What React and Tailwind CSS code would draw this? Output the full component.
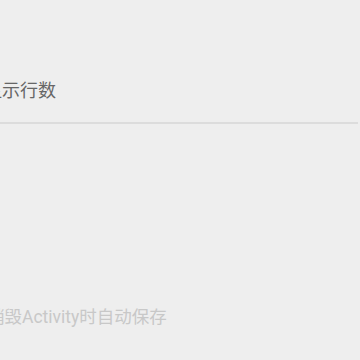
export default function App() {
  return (
    <div
      className="w-[360px] h-[360px] overflow-hidden bg-[#eeeeee] flex flex-col"
      style={{ fontFamily: 'Roboto, "Noto Sans CJK SC", sans-serif' }}
    >
      <div className="mt-[79px] -ml-[16px] text-[18px] leading-[24px] text-[#666666] whitespace-nowrap">
        显示行数
      </div>
      <div className="mt-[19px] h-[2px] w-[358px] bg-[#dcdcdc]" />
      <div className="mt-[181px] -ml-[13px] text-[17.5px] leading-[24px] text-[#c8c8c8] whitespace-nowrap">
        销毁Activity时自动保存
      </div>
    </div>
  )
}
